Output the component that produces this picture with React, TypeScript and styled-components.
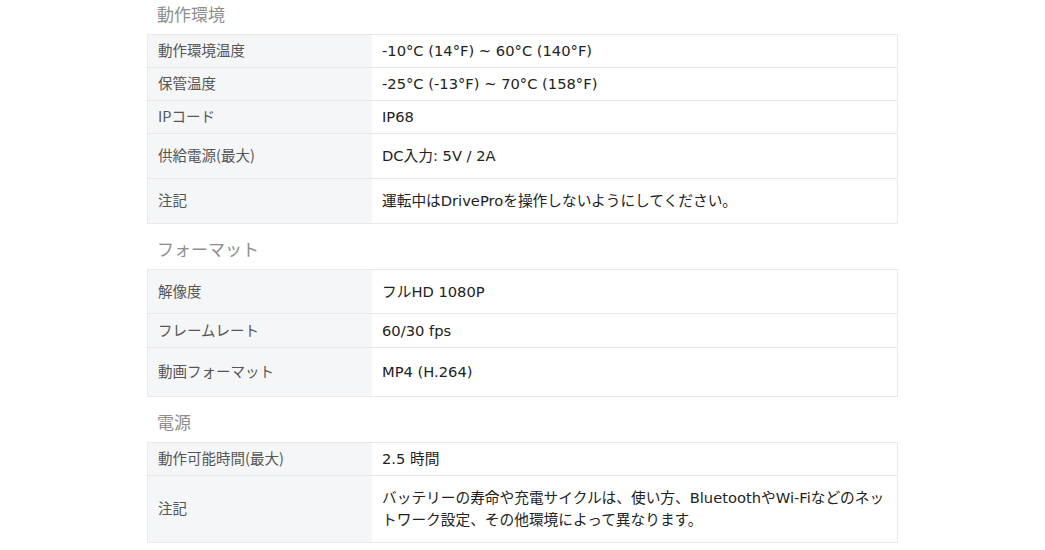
import React from "react";
import styled, { createGlobalStyle } from "styled-components";

type Spec = { label: string; value: React.ReactNode; h: number };
type Section = { title: string; rows: Spec[] };

const sections: Section[] = [
  {
    title: "動作環境",
    rows: [
      { label: "動作環境温度", value: "-10°C (14°F) ~ 60°C (140°F)", h: 33 },
      { label: "保管温度", value: "-25°C (-13°F) ~ 70°C (158°F)", h: 33 },
      { label: "IPコード", value: "IP68", h: 33 },
      { label: "供給電源(最大)", value: "DC入力: 5V / 2A", h: 45 },
      { label: "注記", value: "運転中はDriveProを操作しないようにしてください。", h: 45 },
    ],
  },
  {
    title: "フォーマット",
    rows: [
      { label: "解像度", value: "フルHD 1080P", h: 44 },
      { label: "フレームレート", value: "60/30 fps", h: 34 },
      { label: "動画フォーマット", value: "MP4 (H.264)", h: 49 },
    ],
  },
  {
    title: "電源",
    rows: [
      { label: "動作可能時間(最大)", value: "2.5 時間", h: 33 },
      {
        label: "注記",
        value:
          "バッテリーの寿命や充電サイクルは、使い方、BluetoothやWi-Fiなどのネットワーク設定、その他環境によって異なります。",
        h: 67,
      },
    ],
  },
];

const GlobalStyle = createGlobalStyle`
  html, body {
    margin: 0;
    background: #fff;
    font-family: "DejaVu Sans", "Noto Sans CJK JP", sans-serif;
  }
`;

const Page = styled.div`
  width: 751px;
  margin-left: 147px;
`;

const Block = styled.section<{ $first: boolean }>`
  margin-top: ${(p) => (p.$first ? 0 : 11)}px;
`;

const Heading = styled.h3`
  margin: 0 0 6px;
  padding-left: 10px;
  height: 28px;
  line-height: 27px;
  font-size: 17px;
  font-weight: 400;
  color: #8e8e8e;
  font-family: "Noto Sans CJK JP", sans-serif;
`;

const Table = styled.div`
  border: 1px solid #e9e9e9;
  border-bottom: none;
`;

const Row = styled.div<{ $h: number }>`
  display: grid;
  grid-template-columns: 224px 1fr;
  height: ${(p) => p.$h}px;
  box-sizing: border-box;
  border-bottom: 1px solid #e9e9e9;
`;

const Label = styled.div`
  display: flex;
  align-items: center;
  padding: 0 10px 2px;
  background: #f5f6f8;
  color: #555;
  font-size: 14.5px;
  line-height: 22px;
  font-family: "Noto Sans CJK JP", sans-serif;
`;

const Value = styled.div`
  display: flex;
  align-items: center;
  padding: 0 10px;
  color: #222;
  font-size: 14.7px;
  line-height: 22px;
  font-family: "DejaVu Sans", "Noto Sans CJK JP", sans-serif;
`;

export default function App() {
  return (
    <>
      <GlobalStyle />
      <Page>
        {sections.map((s, i) => (
          <Block key={s.title} $first={i === 0}>
            <Heading>{s.title}</Heading>
            <Table>
              {s.rows.map((r) => (
                <Row key={r.label} $h={r.h}>
                  <Label>{r.label}</Label>
                  <Value>{r.value}</Value>
                </Row>
              ))}
            </Table>
          </Block>
        ))}
      </Page>
    </>
  );
}
